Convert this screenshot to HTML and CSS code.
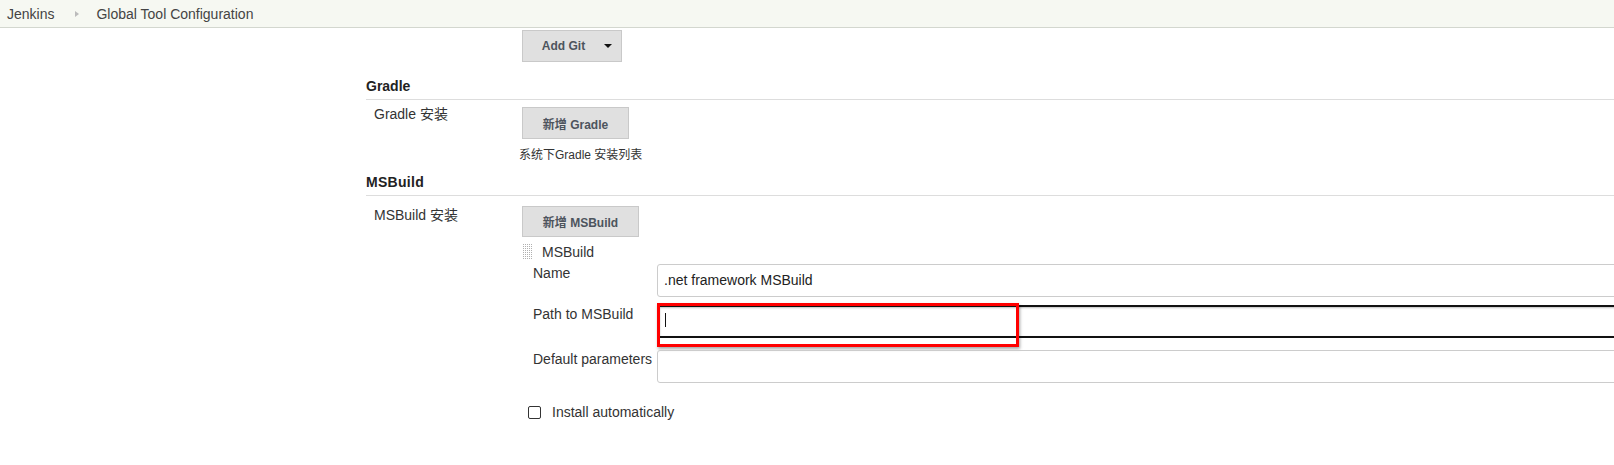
FILE: index.html
```html
<!DOCTYPE html>
<html lang="en">
<head>
  <meta charset="UTF-8">
  <title>Global Tool Configuration [Jenkins]</title>
  <link rel="stylesheet" href="styles.css">
</head>
<body>
  <div class="topNav">
    <span class="crumb">Jenkins</span>
    <i class="crumbArrow"></i>
    <span class="crumb">Global Tool Configuration</span>
  </div>

  <div class="config">
    <div class="row gitRow">
      <div class="rowLabel"></div>
      <div class="setting">
        <div class="btn btnMenu"><span>Add Git</span><i class="caret"></i></div>
      </div>
    </div>

    <div class="sectionHead">Gradle</div>
    <div class="row gradleRow">
      <div class="rowLabel">Gradle 安装</div>
      <div class="setting">
        <div class="btn">新增 Gradle</div>
        <div class="desc">系统下Gradle 安装列表</div>
      </div>
    </div>

    <div class="sectionHead msHead">MSBuild</div>
    <div class="row msRow">
      <div class="rowLabel">MSBuild 安装</div>
      <div class="setting">
        <div class="btn">新增 MSBuild</div>
        <div class="chunk">
          <div class="chunkTitle">
            <i class="handle"></i>
            <span>MSBuild</span>
          </div>
          <div class="field nameField">
            <div class="fieldLabel">Name</div>
            <div class="fieldBox">
              <div class="ipt">.net framework MSBuild</div>
            </div>
          </div>
          <div class="field pathField">
            <div class="fieldLabel">Path to MSBuild</div>
            <div class="fieldBox">
              <div class="ipt iptFocus"><i class="cursor"></i></div>
              <div class="mark"></div>
            </div>
          </div>
          <div class="field argsField">
            <div class="fieldLabel">Default parameters</div>
            <div class="fieldBox">
              <div class="ipt"></div>
            </div>
          </div>
          <div class="check">
            <i class="box"></i>
            <span>Install automatically</span>
          </div>
        </div>
      </div>
    </div>
  </div>
</body>
</html>
```

FILE: styles.css
```css
* {
  margin: 0;
  padding: 0;
  box-sizing: border-box;
}
body {
  font-family: "Liberation Sans", Arial, "Noto Sans CJK SC", sans-serif;
  font-size: 14px;
  color: #333;
  background: #fff;
  overflow: hidden;
  width: 1614px;
  height: 465px;
}
/* 面包屑 */
.topNav {
  display: flex;
  align-items: center;
  height: 28px;
  padding-left: 7px;
  background-color: #f6f8f2;
  border-bottom: 1px solid #d3d7cf;
  color: #444;
}
.crumbArrow {
  width: 0;
  height: 0;
  margin: 0 17px 0 21px;
  border-top: 3px solid transparent;
  border-bottom: 3px solid transparent;
  border-left: 4px solid #bbb;
}
/* 配置区 */
.config {
  margin-left: 366px;
}
.row {
  display: flex;
}
.rowLabel {
  width: 156px;
  padding-left: 8px;
  line-height: 16px;
  flex-shrink: 0;
}
.setting {
  flex: 1;
}
.btn {
  display: inline-flex;
  align-items: center;
  justify-content: center;
  height: 32px;
  padding: 0 18px;
  background-color: #e0e0e0;
  border: 1px solid #c9c9c9;
  font-size: 12px;
  font-weight: 700;
  color: #4d545d;
  white-space: nowrap;
}
.btnMenu {
  width: 100px;
  padding: 0 0 0 10px;
}
.caret {
  width: 0;
  height: 0;
  margin-left: 19px;
  border-left: 4px solid transparent;
  border-right: 4px solid transparent;
  border-top: 4px solid #111;
}
.gitRow {
  margin-top: 2px;
}
.sectionHead {
  margin-top: 16px;
  padding-bottom: 5px;
  line-height: 16px;
  font-weight: 700;
  color: #222;
  border-bottom: 1px solid #ddd;
}
.msHead {
  margin-top: 12px;
  letter-spacing: 0.3px;
}
.gradleRow .rowLabel {
  padding-top: 6px;
}
.gradleRow .btn {
  margin-top: 7px;
  width: 107px;
}
.desc {
  margin-top: 9px;
  margin-left: -3px;
  font-size: 12px;
  line-height: 14px;
}
.msRow .rowLabel {
  padding-top: 11px;
}
.msRow .btn {
  margin-top: 10px;
  width: 117px;
  height: 31px;
}
/* 单个 MSBuild 配置 */
.chunk {
  margin-top: 6px;
}
.chunkTitle {
  display: flex;
  align-items: center;
  height: 17px;
}
.handle {
  width: 11px;
  height: 17px;
  margin-right: 9px;
  background:
    linear-gradient(90deg, #fff 1px, transparent 1px) 0 0 / 2px 2px,
    linear-gradient(#fff 1px, #b0b0b0 1px) 0 0 / 2px 2px;
}
.field {
  display: flex;
  margin-left: 11px;
}
.fieldLabel {
  width: 124px;
  padding-top: 1px;
  line-height: 16px;
  flex-shrink: 0;
}
.fieldBox {
  position: relative;
}
.ipt {
  width: 1000px;
  height: 33px;
  padding: 0 6px;
  border: 1px solid #ccc;
  border-radius: 3px;
  line-height: 31px;
  color: #222;
}
.nameField {
  margin-top: 4px;
}
.pathField {
  margin-top: 8px;
}
.argsField {
  margin-top: 12px;
}
.iptFocus {
  border: 2px solid #111;
  border-radius: 0;
  box-shadow: inset 1px 1px 2px rgba(0, 0, 0, 0.25);
}
.cursor {
  display: block;
  width: 1px;
  height: 14px;
  margin-top: 6px;
  background-color: #111;
}
/* 标注框 */
.mark {
  position: absolute;
  left: 0;
  top: -2px;
  width: 362px;
  height: 44px;
  border: 3px solid #f00;
  box-shadow: 1px 2px 3px rgba(0, 0, 0, 0.35);
}
.check {
  display: flex;
  align-items: center;
  margin-top: 21px;
  margin-left: 6px;
  line-height: 16px;
}
.box {
  width: 13px;
  height: 13px;
  margin-right: 11px;
  border: 1px solid #333;
  border-radius: 2px;
  background-color: #fff;
}
```
